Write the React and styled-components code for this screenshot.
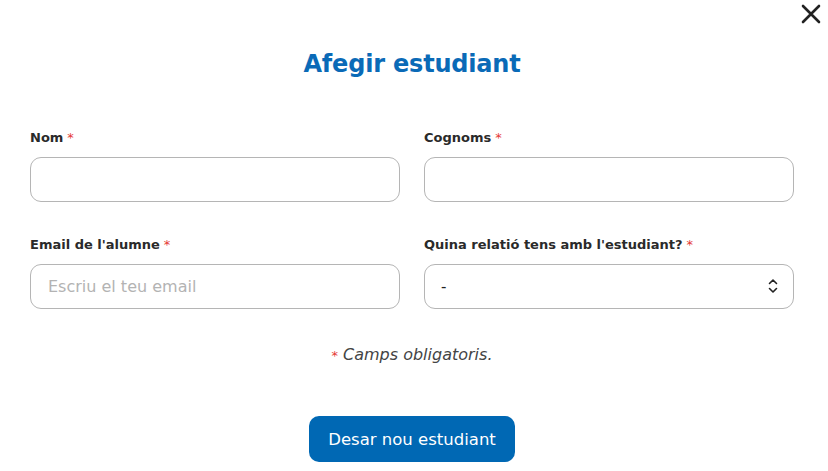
import React from "react";
import styled, { createGlobalStyle } from "styled-components";

const GlobalStyle = createGlobalStyle`
  html, body {
    margin: 0;
    padding: 0;
    background: #fff;
  }
  body {
    font-family: "DejaVu Sans", "Open Sans", sans-serif;
    color: #222;
  }
`;

const Modal = styled.div`
  position: relative;
  width: 828px;
  height: 471px;
  box-sizing: border-box;
  padding: 46px 34px 0 30px;
  background: #fff;
  overflow: hidden;
`;

const Close = styled.button`
  position: absolute;
  top: 3px;
  right: 6px;
  width: 22px;
  height: 22px;
  padding: 0;
  border: none;
  background: none;
  cursor: pointer;
`;

const Title = styled.h2`
  margin: 0;
  text-align: center;
  font-size: 24px;
  font-weight: 700;
  color: #0a6ab7;
  line-height: 36px;
  letter-spacing: -0.2px;
`;

const Grid = styled.div`
  display: grid;
  grid-template-columns: 1fr 1fr;
  column-gap: 24px;
  row-gap: 34px;
  margin-top: 47px;
`;

const Field = styled.div`
  display: flex;
  flex-direction: column;
  gap: 10px;
`;

const Label = styled.label`
  font-size: 13px;
  font-weight: 600;
  color: #2a2a2a;
  line-height: 18px;
`;

const Star = styled.span`
  color: #e53935;
  margin: ${p => (p.$lead ? "0 5px 0 0" : "0 0 0 4px")};
  font-size: ${p => (p.$lead ? "13px" : "inherit")};
  font-weight: 400;
  font-style: normal;
`;

const Input = styled.input`
  box-sizing: border-box;
  height: 45px;
  width: 100%;
  border: 1px solid #b5b5b5;
  border-radius: 11px;
  padding: 0 17px;
  font-family: inherit;
  font-size: 16px;
  color: #222;
  outline: none;
  &::placeholder {
    color: #b3b3b3;
  }
`;

const SelectBox = styled.div`
  position: relative;
  height: 45px;
`;

const Select = styled.select`
  box-sizing: border-box;
  appearance: none;
  height: 45px;
  width: 100%;
  border: 1px solid #b5b5b5;
  border-radius: 11px;
  padding: 0 16px;
  background: #fff;
  font-family: inherit;
  font-size: 15px;
  color: #222;
  outline: none;
`;

const Chevrons = styled.svg`
  position: absolute;
  right: 16px;
  top: 14px;
  pointer-events: none;
`;

const Note = styled.p`
  margin: 36px 0 0;
  text-align: center;
  font-size: 16px;
  font-style: italic;
  color: #444;
`;

const Actions = styled.div`
  display: flex;
  justify-content: center;
  margin-top: 52px;
`;

const Button = styled.button`
  width: 206px;
  height: 46px;
  border: none;
  border-radius: 10px;
  background: #0068b4;
  color: #fff;
  font-family: inherit;
  font-size: 16.5px;
  cursor: pointer;
`;

export default function App() {
  return (
    <>
      <GlobalStyle />
      <Modal>
        <Close aria-label="Tancar">
          <svg width="22" height="22" viewBox="0 0 22 22">
            <path d="M3 3 L19 19 M19 3 L3 19" stroke="#222" strokeWidth="2.6" strokeLinecap="round" />
          </svg>
        </Close>
        <Title>Afegir estudiant</Title>
        <Grid>
          <Field>
            <Label>Nom<Star>*</Star></Label>
            <Input type="text" />
          </Field>
          <Field>
            <Label>Cognoms<Star>*</Star></Label>
            <Input type="text" />
          </Field>
          <Field>
            <Label>Email de l'alumne<Star>*</Star></Label>
            <Input type="email" placeholder="Escriu el teu email" />
          </Field>
          <Field>
            <Label>Quina relatió tens amb l'estudiant?<Star>*</Star></Label>
            <SelectBox>
              <Select defaultValue="-">
                <option value="-">-</option>
              </Select>
              <Chevrons width="10" height="16" viewBox="0 0 10 16">
                <path d="M1.5 5.5 L5 2 L8.5 5.5 M1.5 10.5 L5 14 L8.5 10.5" fill="none" stroke="#222" strokeWidth="1.6" strokeLinecap="round" strokeLinejoin="round" />
              </Chevrons>
            </SelectBox>
          </Field>
        </Grid>
        <Note><Star $lead>*</Star>Camps obligatoris.</Note>
        <Actions>
          <Button>Desar nou estudiant</Button>
        </Actions>
      </Modal>
    </>
  );
}
